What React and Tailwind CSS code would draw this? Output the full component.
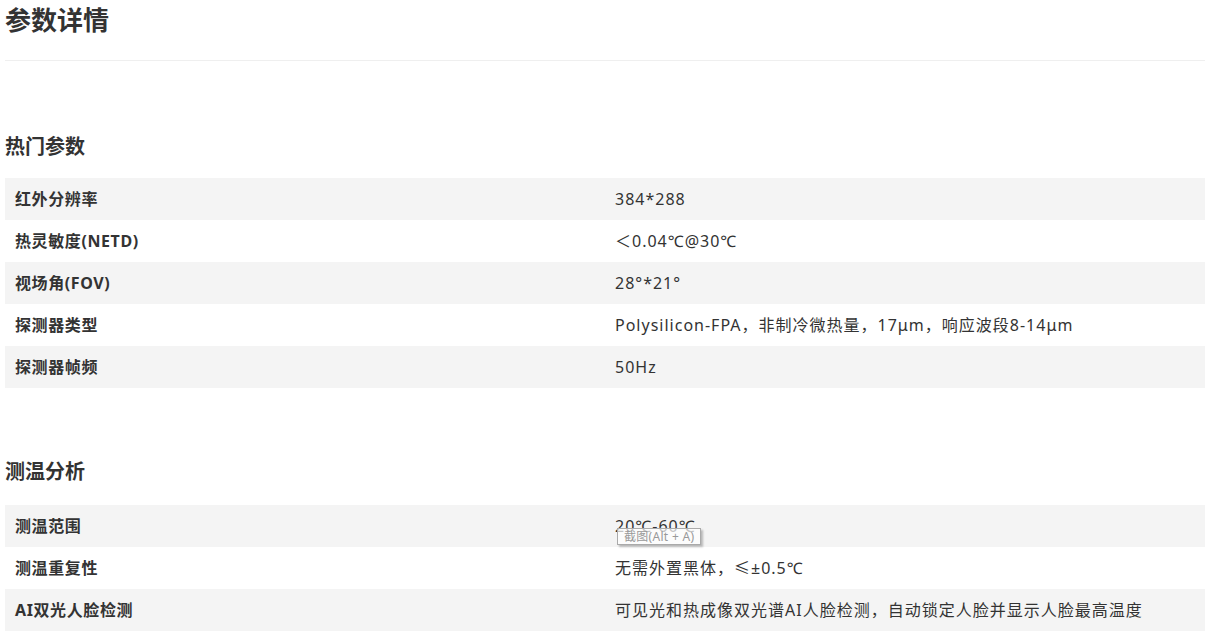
const hot = [
  ['红外分辨率', '384*288'],
  ['热灵敏度(NETD)', '＜0.04℃@30℃'],
  ['视场角(FOV)', '28°*21°'],
  ['探测器类型', 'Polysilicon-FPA，非制冷微热量，17μm，响应波段8-14μm'],
  ['探测器帧频', '50Hz'],
]

const temp = [
  ['测温范围', '20℃-60℃'],
  ['测温重复性', '无需外置黑体，≤±0.5℃'],
  ['AI双光人脸检测', '可见光和热成像双光谱AI人脸检测，自动锁定人脸并显示人脸最高温度'],
]

function ParamTable({ rows, tip }) {
  return (
    <div className="relative">
      {rows.map(([k, v], i) => (
        <div key={k} className={`flex h-[42px] items-center ${i % 2 === 0 ? 'bg-[#f4f4f4]' : 'bg-white'}`}>
          <div className="w-1/2 pl-[10px] text-[16px] font-bold tracking-[0.6px] text-[#333]">{k}</div>
          <div className="w-1/2 pl-[10px] text-[16px] tracking-[1px] text-[#333]">{v}</div>
        </div>
      ))}
      {/* screenshot-tool hint that sits over the first row */}
      {tip && (
        <div className="absolute left-[612px] top-[23px] border border-[#aaa] bg-white/70 px-[6px] text-[12px] leading-[15px] tracking-[0.3px] text-[#999] shadow-[2px_2px_2px_rgba(0,0,0,0.25)]">
          截图(Alt + A)
        </div>
      )}
    </div>
  )
}

export default function App() {
  return (
    <div className="min-h-[638px] bg-white px-[5px] pr-[16px]" style={{ fontFamily: '"Noto Sans", "Noto Sans CJK SC", sans-serif' }}>
      <h1 className="pt-[3px] text-[26px] font-bold leading-[34px] text-[#333]">参数详情</h1>
      <div className="mt-[23px] h-px bg-[#efefef]" />

      <h2 className="mt-[72px] text-[20px] font-bold leading-[28px] text-[#333]">热门参数</h2>
      <div className="mt-[17px]">
        <ParamTable rows={hot} />
      </div>

      <h2 className="mt-[70px] text-[20px] font-bold leading-[28px] text-[#333]">测温分析</h2>
      <div className="mt-[19px]">
        <ParamTable rows={temp} tip />
      </div>
    </div>
  )
}
